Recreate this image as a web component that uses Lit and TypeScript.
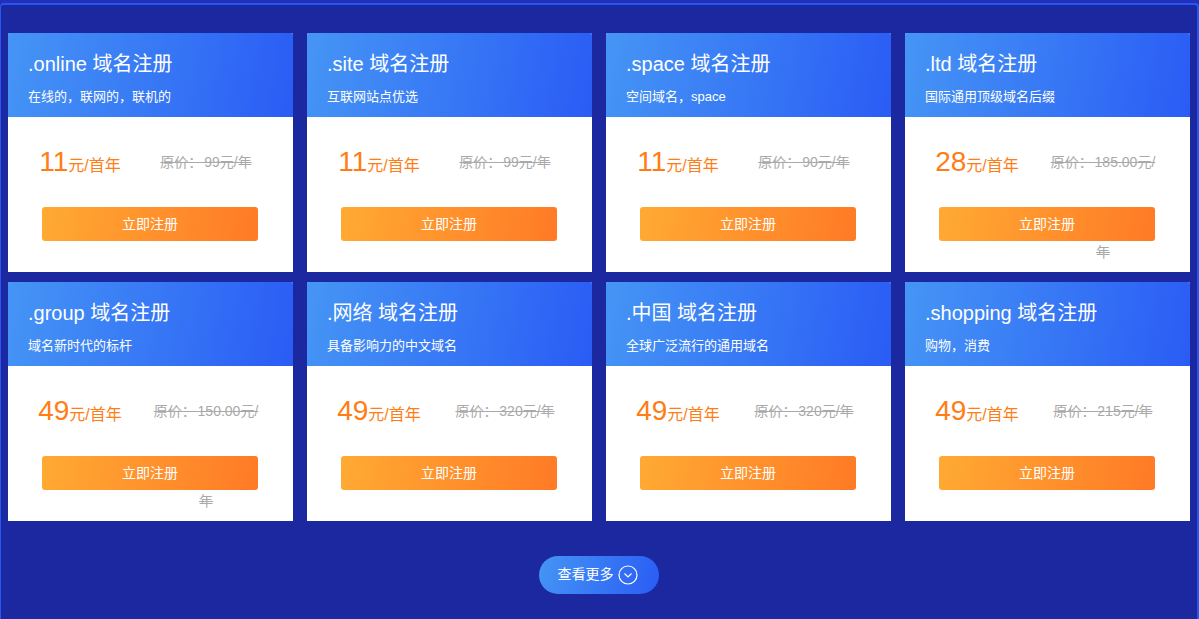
import { LitElement, html, css } from "lit";
import { customElement } from "lit/decorators.js";

const items = [
  { t: ".online 域名注册", d: "在线的，联网的，联机的", p: "11", o: "原价： 99元/年" },
  { t: ".site 域名注册", d: "互联网站点优选", p: "11", o: "原价： 99元/年" },
  { t: ".space 域名注册", d: "空间域名，space", p: "11", o: "原价： 90元/年" },
  { t: ".ltd 域名注册", d: "国际通用顶级域名后缀", p: "28", o: "原价： 185.00元/年" },
  { t: ".group 域名注册", d: "域名新时代的标杆", p: "49", o: "原价： 150.00元/年" },
  { t: ".网络 域名注册", d: "具备影响力的中文域名", p: "49", o: "原价： 320元/年" },
  { t: ".中国 域名注册", d: "全球广泛流行的通用域名", p: "49", o: "原价： 320元/年" },
  { t: ".shopping 域名注册", d: "购物，消费", p: "49", o: "原价： 215元/年" },
];

@customElement("app-root")
export class AppRoot extends LitElement {
  static styles = css`
    :host {
      display: block;
      padding-top: 3px;
      background: #2030b8;
      font-family: "Liberation Sans", "Noto Sans CJK SC", sans-serif;
    }
    .wrap {
      box-sizing: border-box;
      width: 1199px;
      height: 616px;
      background: #1b28a0;
      border-style: solid;
      border-color: #2a55f5;
      border-width: 2px 2px 0 1px;
      border-radius: 4px 4px 0 0;
      padding: 28px 7px 0 7px;
      overflow: hidden;
    }
    .grid {
      display: grid;
      grid-template-columns: repeat(4, 285px);
      column-gap: 14px;
      row-gap: 10px;
    }
    .card {
      height: 239px;
      background: #fff;
      border-radius: 2px 2px 0 0;
      display: flex;
      flex-direction: column;
    }
    .head {
      box-sizing: border-box;
      height: 84px;
      padding: 19px 20px 0;
      color: #fff;
      background: linear-gradient(100deg, #4595f5, #2a5cf5);
      border-radius: 2px 2px 0 0;
    }
    .title {
      font-size: 20px;
      line-height: 24px;
    }
    .desc {
      font-size: 13px;
      line-height: 18px;
      margin-top: 12px;
    }
    .prices {
      height: 90px;
      display: flex;
    }
    .now {
      width: 144px;
      text-align: center;
      line-height: 90px;
      font-size: 16px;
      color: #ff7d14;
      white-space: nowrap;
    }
    .num {
      font-size: 28px;
    }
    .old {
      box-sizing: border-box;
      width: 108px;
      text-align: center;
      line-height: 90px;
      font-size: 14px;
      word-spacing: -2px;
      color: #a9a9a9;
      text-decoration: line-through;
    }
    .buy {
      box-sizing: border-box;
      width: 216px;
      height: 34px;
      margin-left: 34px;
      border-radius: 3px;
      color: #fff;
      font-size: 14px;
      line-height: 34px;
      text-align: center;
      background: linear-gradient(100deg, #ffaa33, #ff7a26);
    }
    .more-row {
      display: flex;
      justify-content: center;
      margin-top: 35px;
      padding-right: 1px;
    }
    .more {
      box-sizing: border-box;
      width: 120px;
      height: 38px;
      border-radius: 19px;
      padding-left: 19px;
      display: flex;
      align-items: center;
      gap: 4px;
      color: #fff;
      font-size: 14px;
      line-height: 36px;
      background: linear-gradient(105deg, #4595f5, #2a5cf5);
    }
    .label {
      margin-top: -2px;
    }
    .more svg {
      display: block;
      flex: none;
    }
  `;

  render() {
    return html`
      <div class="wrap">
        <div class="grid">
          ${items.map(
            (i) => html`
              <div class="card">
                <div class="head">
                  <div class="title">${i.t}</div>
                  <div class="desc">${i.d}</div>
                </div>
                <div class="prices">
                  <div class="now"><span class="num">${i.p}</span>元/首年</div>
                  <div class="old">${i.o}</div>
                </div>
                <div class="buy">立即注册</div>
              </div>
            `
          )}
        </div>
        <div class="more-row">
          <div class="more">
            <span class="label">查看更多</span>
            <svg width="20" height="20" viewBox="0 0 20 20" fill="none" stroke="#fff">
              <circle cx="10" cy="10" r="9" stroke-width="1.2"></circle>
              <path d="M6.5 8.5 L10 12 L13.5 8.5" stroke-width="1.2"></path>
            </svg>
          </div>
        </div>
      </div>
    `;
  }
}
